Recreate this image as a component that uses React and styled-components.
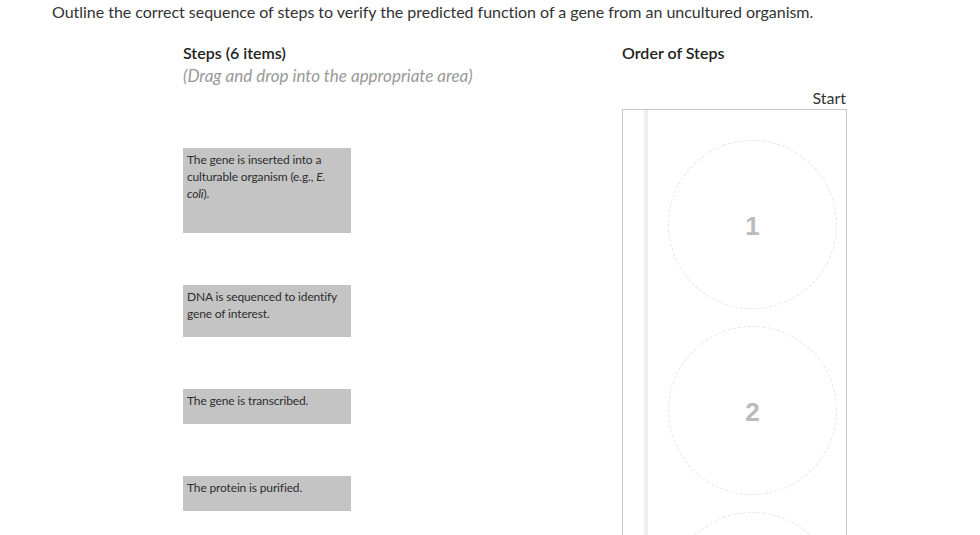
import React from "react";
import styled, { createGlobalStyle } from "styled-components";

const Global = createGlobalStyle`
  html, body { margin: 0; padding: 0; background: #fff; overflow: hidden; }
  body { font-family: Lato, "Open Sans", sans-serif; color: #333; }
`;

const Page = styled.div`
  width: 980px;
  height: 535px;
  overflow: hidden;
  padding: 2px 0 0 52px;
  box-sizing: border-box;
`;

const Title = styled.div`
  font-size: 16px;
  line-height: 20px;
  letter-spacing: -0.03px;
  color: #333;
`;

const Columns = styled.div`
  display: flex;
  padding-left: 131px;
  margin-top: 21px;
`;

const LeftCol = styled.div`
  width: 439px;
  display: flex;
  flex-direction: column;
`;

const RightCol = styled.div`
  width: 225px;
  display: flex;
  flex-direction: column;
`;

const Heading = styled.div`
  font-size: 16px;
  line-height: 20px;
  font-weight: 600;
  letter-spacing: 0;
  color: #222;
`;

const Sub = styled.div`
  margin-top: 3px;
  font-size: 17px;
  line-height: 20px;
  font-style: italic;
  color: #999;
`;

const CardList = styled.div`
  margin-top: 62px;
  display: flex;
  flex-direction: column;
  gap: 52px;
`;

const Card = styled.div`
  width: 168px;
  box-sizing: border-box;
  min-height: ${(p) => p.$minH || 0}px;
  padding: 3px 4px 15px 4px;
  background: #c4c4c4;
  font-size: 12px;
  line-height: 17px;
  letter-spacing: -0.15px;
  color: #2e2e2e;
`;

const StartLabel = styled.div`
  margin-top: 26px;
  text-align: right;
  padding-right: 1px;
  font-size: 16px;
  line-height: 18px;
  color: #333;
`;

const DropBox = styled.div`
  margin-top: 2px;
  height: 520px;
  border: 1px solid #c8c8c8;
  display: flex;
`;

const Rail = styled.div`
  margin-left: 21px;
  width: 4px;
  background: #efefef;
`;

const Slots = styled.div`
  padding: 30px 0 0 20px;
  display: flex;
  flex-direction: column;
  gap: 17px;
`;

const Slot = styled.div`
  width: 169px;
  height: 169px;
  box-sizing: border-box;
  border-radius: 50%;
  border: 1px dashed #e4e4e4;
  display: flex;
  align-items: center;
  justify-content: center;
  font-family: "Liberation Sans", Arial, sans-serif;
  font-weight: bold;
  font-size: 26px;
  color: #bbb;
  padding-top: 4px;
  flex-shrink: 0;
`;

export default function App() {
  return (
    <Page>
      <Global />
      <Title>
        Outline the correct sequence of steps to verify the predicted function of a gene from an uncultured organism.
      </Title>
      <Columns>
        <LeftCol>
          <Heading>Steps (6 items)</Heading>
          <Sub>(Drag and drop into the appropriate area)</Sub>
          <CardList>
            <Card $minH={85}>
              The gene is inserted into a culturable organism (e.g., <i>E. coli</i>).
            </Card>
            <Card>DNA is sequenced to identify gene of interest.</Card>
            <Card>The gene is transcribed.</Card>
            <Card>The protein is purified.</Card>
          </CardList>
        </LeftCol>
        <RightCol>
          <Heading>Order of Steps</Heading>
          <StartLabel>Start</StartLabel>
          <DropBox>
            <Rail />
            <Slots>
              <Slot>1</Slot>
              <Slot>2</Slot>
              <Slot>3</Slot>
            </Slots>
          </DropBox>
        </RightCol>
      </Columns>
    </Page>
  );
}
